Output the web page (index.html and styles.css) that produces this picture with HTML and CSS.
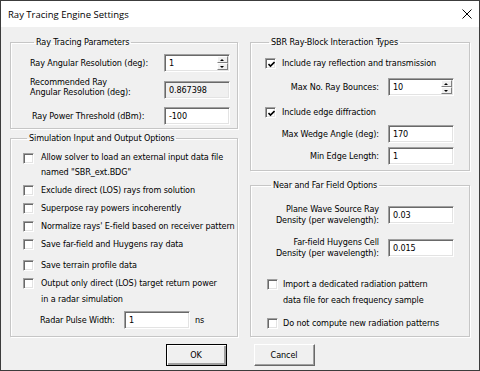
FILE: index.html
```html
<!DOCTYPE html>
<html lang="en">
<head>
  <meta charset="UTF-8" />
  <title>Ray Tracing Engine Settings</title>
  <link rel="stylesheet" href="styles.css">
</head>
<body>
  <div class="window">
    <div class="titlebar">
      <span class="title">Ray Tracing Engine Settings</span>
      <svg class="close" width="10" height="10" viewBox="0 0 10 10">
        <path d="M0.5 0.5 L9.5 9.5 M9.5 0.5 L0.5 9.5" stroke="#000" stroke-width="1" fill="none"/>
      </svg>
    </div>

    <div class="dialog">
      <div class="columns">
        <div class="col col-left">
          <fieldset class="group group-params">
            <legend>Ray Tracing Parameters</legend>
            <div class="field">
              <span class="label">Ray Angular Resolution (deg):</span>
              <div class="edit spin">
                <span class="val">1</span>
                <span class="spin-btns"><span class="up"></span><span class="down"></span></span>
              </div>
            </div>
            <div class="field">
              <span class="label two-line">Recommended Ray<br>Angular Resolution (deg):</span>
              <div class="edit readonly"><span class="val">0.867398</span></div>
            </div>
            <div class="field">
              <span class="label indent">Ray Power Threshold (dBm):</span>
              <div class="edit"><span class="val">-100</span></div>
            </div>
          </fieldset>

          <fieldset class="group group-sim">
            <legend>Simulation Input and Output Options</legend>
            <div class="check tight">
              <span class="box"></span>
              <span class="text">Allow solver to load an external input data file<br>named "SBR_ext.BDG"</span>
            </div>
            <div class="check">
              <span class="box"></span>
              <span class="text">Exclude direct (LOS) rays from solution</span>
            </div>
            <div class="check">
              <span class="box"></span>
              <span class="text">Superpose ray powers incoherently</span>
            </div>
            <div class="check">
              <span class="box"></span>
              <span class="text">Normalize rays' E-field based on receiver pattern</span>
            </div>
            <div class="check">
              <span class="box"></span>
              <span class="text">Save far-field and Huygens ray data</span>
            </div>
            <div class="check mt-3">
              <span class="box"></span>
              <span class="text">Save terrain profile data</span>
            </div>
            <div class="check">
              <span class="box"></span>
              <span class="text">Output only direct (LOS) target return power<br>in a radar simulation</span>
            </div>
            <div class="pulse-row">
              <span class="pulse-label">Radar Pulse Width:</span>
              <div class="edit"><span class="val">1</span></div>
              <span class="unit">ns</span>
            </div>
          </fieldset>
        </div>

        <div class="col col-right">
          <fieldset class="group group-sbr">
            <legend>SBR Ray-Block Interaction Types</legend>
            <div class="check mt-7">
              <span class="box checked">
                <svg width="7" height="7" viewBox="0 0 7 7"><path d="M0.5 3 L2.5 5 L6.5 1" stroke="#000" stroke-width="1.6" fill="none"/></svg>
              </span>
              <span class="text">Include ray reflection and transmission</span>
            </div>
            <div class="field right mt-7">
              <span class="label">Max No. Ray Bounces:</span>
              <div class="edit spin">
                <span class="val">10</span>
                <span class="spin-btns"><span class="up"></span><span class="down"></span></span>
              </div>
            </div>
            <div class="check mt-8">
              <span class="box checked">
                <svg width="7" height="7" viewBox="0 0 7 7"><path d="M0.5 3 L2.5 5 L6.5 1" stroke="#000" stroke-width="1.6" fill="none"/></svg>
              </span>
              <span class="text">Include edge diffraction</span>
            </div>
            <div class="field right mt-5">
              <span class="label">Max Wedge Angle (deg):</span>
              <div class="edit"><span class="val">170</span></div>
            </div>
            <div class="field right mt-4">
              <span class="label">Min Edge Length:</span>
              <div class="edit"><span class="val">1</span></div>
            </div>
          </fieldset>

          <fieldset class="group group-field">
            <legend>Near and Far Field Options</legend>
            <div class="field right mt-13">
              <span class="label two-line">Plane Wave Source Ray<br>Density (per wavelength):</span>
              <div class="edit"><span class="val">0.03</span></div>
            </div>
            <div class="field right mt-11">
              <span class="label two-line">Far-field Huygens Cell<br>Density (per wavelength):</span>
              <div class="edit"><span class="val">0.015</span></div>
            </div>
            <div class="check mt-17">
              <span class="box"></span>
              <span class="text">Import a dedicated radiation pattern<br>data file for each frequency sample</span>
            </div>
            <div class="check mt-7">
              <span class="box"></span>
              <span class="text">Do not compute new radiation patterns</span>
            </div>
          </fieldset>
        </div>
      </div>

      <div class="buttons">
        <button class="btn default">OK</button>
        <button class="btn">Cancel</button>
      </div>
    </div>
  </div>
</body>
</html>
```
FILE: styles.css
```css
body {
  margin: 0;
  font-family: "DejaVu Sans Condensed", "DejaVu Sans", sans-serif;
  font-size: 9px;
  letter-spacing: -0.1px;
  color: #000;
}
.window {
  width: 480px;
  height: 371px;
  box-sizing: border-box;
  border: 1px solid #3c3c3c;
  background: #f0f0f0;
  display: flex;
  flex-direction: column;
}
.titlebar {
  height: 26px;
  background: #fff;
  display: flex;
  align-items: center;
  justify-content: space-between;
  padding: 0 7px 0 7px;
}
.title {
  font-family: "Open Sans", sans-serif;
  font-size: 9.5px;
  letter-spacing: 0;
}
.dialog {
  padding: 9px 9px 0 9px;
}
.columns {
  display: flex;
  gap: 12px;
}
.col {
  display: flex;
  flex-direction: column;
}
.col-left { width: 228px; gap: 3px; }
.col-right { width: 220px; gap: 8px; }

/* group boxes */
.group {
  margin: 0;
  box-sizing: border-box;
  border: 1px solid #c6c6c6;
  box-shadow: inset 1px 1px 0 #fff, 1px 1px 0 #fff;
  display: flex;
  flex-direction: column;
}
.group legend {
  margin-left: 4px;
  padding: 0 2px;
  line-height: 12px;
}
.group-params { height: 93px; padding: 6px 7px 0 19px; gap: 5px; }
.group-sim { height: 205px; padding: 6px 0 0 12px; gap: 2px; }
.group-sbr { height: 135px; padding: 0 15px 0 14px; }
.group-field { height: 158px; padding: 0 15px 0 16px; }

.mt-3 { margin-top: 3px; }
.mt-4 { margin-top: 4px; }
.mt-5 { margin-top: 5px; }
.mt-7 { margin-top: 7px; }
.mt-8 { margin-top: 8px; }
.mt-11 { margin-top: 11px; }
.mt-13 { margin-top: 13px; }
.mt-17 { margin-top: 17px; }

/* label + edit rows */
.field {
  display: flex;
  align-items: center;
}
.field .label {
  flex: 1;
  white-space: nowrap;
}
.field .label.indent { padding-left: 2px; }
.field .label.two-line {
  line-height: 10px;
  margin-bottom: 5px;
}
.field.right .label {
  text-align: right;
  padding-right: 9px;
}
.field.right .label.two-line {
  line-height: 11px;
  margin-bottom: 0;
}

.edit {
  width: 66px;
  height: 18px;
  box-sizing: border-box;
  border: 1px solid;
  border-color: #a0a0a0 #fff #fff #a0a0a0;
  box-shadow: inset 1px 1px 0 #696969, inset -1px -1px 0 #e3e3e3;
  padding: 1px;
  background: #fff;
  display: flex;
  flex-shrink: 0;
}
.edit.readonly { background: #f0f0f0; }
.edit .val {
  flex: 1;
  padding-left: 3px;
  line-height: 14px;
}
.spin-btns {
  width: 11px;
  display: flex;
  flex-direction: column;
}
.spin-btns span {
  flex: 1;
  background: #f0f0f0;
  border: 1px solid;
  border-color: #fff #808080 #808080 #fff;
  position: relative;
}
.spin-btns span::after {
  content: "";
  position: absolute;
  left: 2px;
  top: 2px;
  border-left: 2px solid transparent;
  border-right: 2px solid transparent;
}
.spin-btns .up::after { border-bottom: 2px solid #000; }
.spin-btns .down::after { border-top: 2px solid #000; }

/* checkboxes */
.check {
  display: flex;
  align-items: flex-start;
  gap: 6px;
  line-height: 16px;
}
.check.tight { line-height: 15px; }
.group-sim .check { gap: 7px; }
.group-field .check { gap: 5px; }
.check .box {
  width: 11px;
  height: 11px;
  margin-top: 3px;
  box-sizing: border-box;
  border: 1px solid;
  border-color: #a0a0a0 #fff #fff #a0a0a0;
  box-shadow: inset 1px 1px 0 #696969, inset -1px -1px 0 #e3e3e3;
  background: #fff;
  flex-shrink: 0;
  display: flex;
  align-items: center;
  justify-content: center;
}
.check .box svg { margin: 1px 0 0 1px; }

.pulse-row {
  display: flex;
  align-items: center;
  margin-top: 2px;
  padding-left: 17px;
}
.pulse-label { width: 84px; }
.unit { margin-left: 5px; }

/* buttons */
.buttons {
  display: flex;
  justify-content: center;
  gap: 27px;
  margin-top: 7px;
}
.btn {
  width: 61px;
  height: 22px;
  box-sizing: border-box;
  font: inherit;
  letter-spacing: inherit;
  color: #000;
  background: #f0f0f0;
  border: 1px solid;
  border-color: #fff #696969 #696969 #fff;
  box-shadow: inset -1px -1px 0 #a0a0a0;
  padding: 0;
}
.btn.default {
  border-color: #000;
  box-shadow: inset 1px 1px 0 #fff, inset -2px -2px 0 #a0a0a0;
}
```
